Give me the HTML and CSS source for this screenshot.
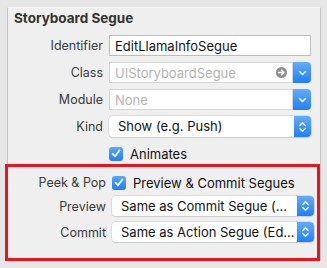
FILE: index.html
```html
<!DOCTYPE html>
<html>
<head>
<meta charset="utf-8">
<link rel="stylesheet" href="styles.css">
</head>
<body>
<div class="panel">
  <div class="title">Storyboard Segue</div>
  <div class="rows">
    <div class="row">
      <span class="label">Identifier</span>
      <div class="field"><span class="value">EditLlamaInfoSegue</span></div>
    </div>
    <div class="row">
      <span class="label">Class</span>
      <div class="combo">
        <div class="field field-dim"><span class="value placeholder">UIStoryboardSegue</span>
          <svg class="goto" width="11" height="11" viewBox="0 0 11 11"><circle cx="5.5" cy="5.5" r="5.5" fill="#8e8e8e"/><path d="M2.6 5.5h5M5.6 3.2l2.3 2.3-2.3 2.3" stroke="#fff" stroke-width="1.5" fill="none" stroke-linecap="round" stroke-linejoin="round"/></svg>
        </div>
        <div class="bluebtn"><svg width="9" height="6" viewBox="0 0 9 6"><path d="M1.5 1.5l3 3 3-3" stroke="#fff" stroke-width="1.4" fill="none" stroke-linecap="round" stroke-linejoin="round"/></svg></div>
      </div>
    </div>
    <div class="row">
      <span class="label">Module</span>
      <div class="combo">
        <div class="field field-dim"><span class="value placeholder">None</span></div>
        <div class="bluebtn"><svg width="9" height="6" viewBox="0 0 9 6"><path d="M1.5 1.5l3 3 3-3" stroke="#fff" stroke-width="1.4" fill="none" stroke-linecap="round" stroke-linejoin="round"/></svg></div>
      </div>
    </div>
    <div class="row">
      <span class="label">Kind</span>
      <div class="popup">
        <span class="popup-text">Show (e.g. Push)</span>
        <div class="popbtn"><svg width="9" height="12" viewBox="0 0 9 12"><path d="M1.8 4.5l2.7-2.7 2.7 2.7M1.8 7.5l2.7 2.7 2.7-2.7" stroke="#fff" stroke-width="1.3" fill="none" stroke-linecap="round" stroke-linejoin="round"/></svg></div>
      </div>
    </div>
    <div class="row">
      <span class="label"></span>
      <div class="check-line">
        <span class="checkbox"><svg width="10" height="9" viewBox="0 0 10 9"><path d="M1.6 4.8l2.4 2.5 4.4-5.8" stroke="#fff" stroke-width="1.7" fill="none" stroke-linecap="round" stroke-linejoin="round"/></svg></span>
        <span class="check-text">Animates</span>
      </div>
    </div>
  </div>
  <div class="highlight">
    <div class="row">
      <span class="label">Peek &amp; Pop</span>
      <div class="check-line">
        <span class="checkbox"><svg width="10" height="9" viewBox="0 0 10 9"><path d="M1.6 4.8l2.4 2.5 4.4-5.8" stroke="#fff" stroke-width="1.7" fill="none" stroke-linecap="round" stroke-linejoin="round"/></svg></span>
        <span class="check-text">Preview &amp; Commit Segues</span>
      </div>
    </div>
    <div class="row row-pop first-pop">
      <span class="label">Preview</span>
      <div class="popup">
        <span class="popup-text">Same as Commit Segue (...</span>
        <div class="popbtn"><svg width="9" height="12" viewBox="0 0 9 12"><path d="M1.8 4.5l2.7-2.7 2.7 2.7M1.8 7.5l2.7 2.7 2.7-2.7" stroke="#fff" stroke-width="1.3" fill="none" stroke-linecap="round" stroke-linejoin="round"/></svg></div>
      </div>
    </div>
    <div class="row row-pop second-pop">
      <span class="label">Commit</span>
      <div class="popup">
        <span class="popup-text">Same as Action Segue (Ed...</span>
        <div class="popbtn"><svg width="9" height="12" viewBox="0 0 9 12"><path d="M1.8 4.5l2.7-2.7 2.7 2.7M1.8 7.5l2.7 2.7 2.7-2.7" stroke="#fff" stroke-width="1.3" fill="none" stroke-linecap="round" stroke-linejoin="round"/></svg></div>
      </div>
    </div>
  </div>
</div>
</body>
</html>
```
FILE: styles.css
```css
* { box-sizing: border-box; }
html, body { margin: 0; padding: 0; }
body {
  background: #e6e6e6;
  font-family: Inter, "Liberation Sans", sans-serif;
  color: #2b2b2b;
  height: 268px;
  overflow: hidden;
}
.panel {
  margin: 7px 0 0 7px;
  width: 314px;
  background: #efefef;
  border: 1px solid #c4c4c4;
  border-bottom: none;
  border-top-color: #f7f7f7;
}
.title {
  padding: 2px 0 0 6px;
  height: 18px;
  line-height: 16px;
  font-size: 13.5px;
  font-weight: 700;
  color: #333;
}
.rows {
  margin-top: 9px;
  display: flex;
  flex-direction: column;
  gap: 6px;
}
.row {
  display: grid;
  grid-template-columns: 95px 202px;
  column-gap: 6px;
  align-items: center;
  height: 21px;
}
.label {
  text-align: right;
  font-size: 12.5px;
  color: #3a3a3a;
}
.field {
  height: 21px;
  background: #fff;
  border: 1px solid #bdbdbd;
  display: flex;
  align-items: center;
  padding-left: 5px;
  font-size: 13px;
  color: #111;
}
.field-dim { border-color: #d6d6d6; flex: 1; }
.placeholder { color: #b4b4b4; }
.value { flex: 1; white-space: nowrap; overflow: hidden; }
.goto { margin-right: 5px; flex: none; }
.combo { display: flex; height: 21px; }
.bluebtn {
  width: 18px;
  height: 21px;
  flex: none;
  border-radius: 0 4px 4px 0;
  background: linear-gradient(#62acfa, #1f80f9);
  display: flex;
  align-items: center;
  justify-content: center;
}
.popup {
  height: 21px;
  display: flex;
  background: #fff;
  border-radius: 4px;
  box-shadow: 0 0 0 0.5px #c8c8c8, 0 1px 1px rgba(0,0,0,0.12);
}
.popup-text {
  flex: 1;
  padding-left: 9px;
  font-size: 13px;
  color: #111;
  line-height: 21px;
  white-space: nowrap;
  overflow: hidden;
}
.popbtn {
  width: 17px;
  flex: none;
  border-radius: 0 4px 4px 0;
  background: linear-gradient(#62acfa, #1f80f9);
  display: flex;
  align-items: center;
  justify-content: center;
}
.check-line { display: flex; align-items: center; gap: 7px; }
.checkbox {
  width: 14px;
  height: 14px;
  border-radius: 3px;
  background: linear-gradient(#5aa8fa, #1f7ff8);
  display: flex;
  align-items: center;
  justify-content: center;
}
.check-text { font-size: 13px; color: #111; }
.highlight {
  margin: 0 0 0 -3px;
  border: 3px solid #e8161c;
  height: 97px;
  padding: 5px 0 0 3px;
}
.row-pop { height: 20px; }
.row-pop .popup { height: 20px; }
.row-pop .popup-text { line-height: 20px; }
.first-pop { margin-top: 3px; }
.second-pop { margin-top: 6px; }
```
